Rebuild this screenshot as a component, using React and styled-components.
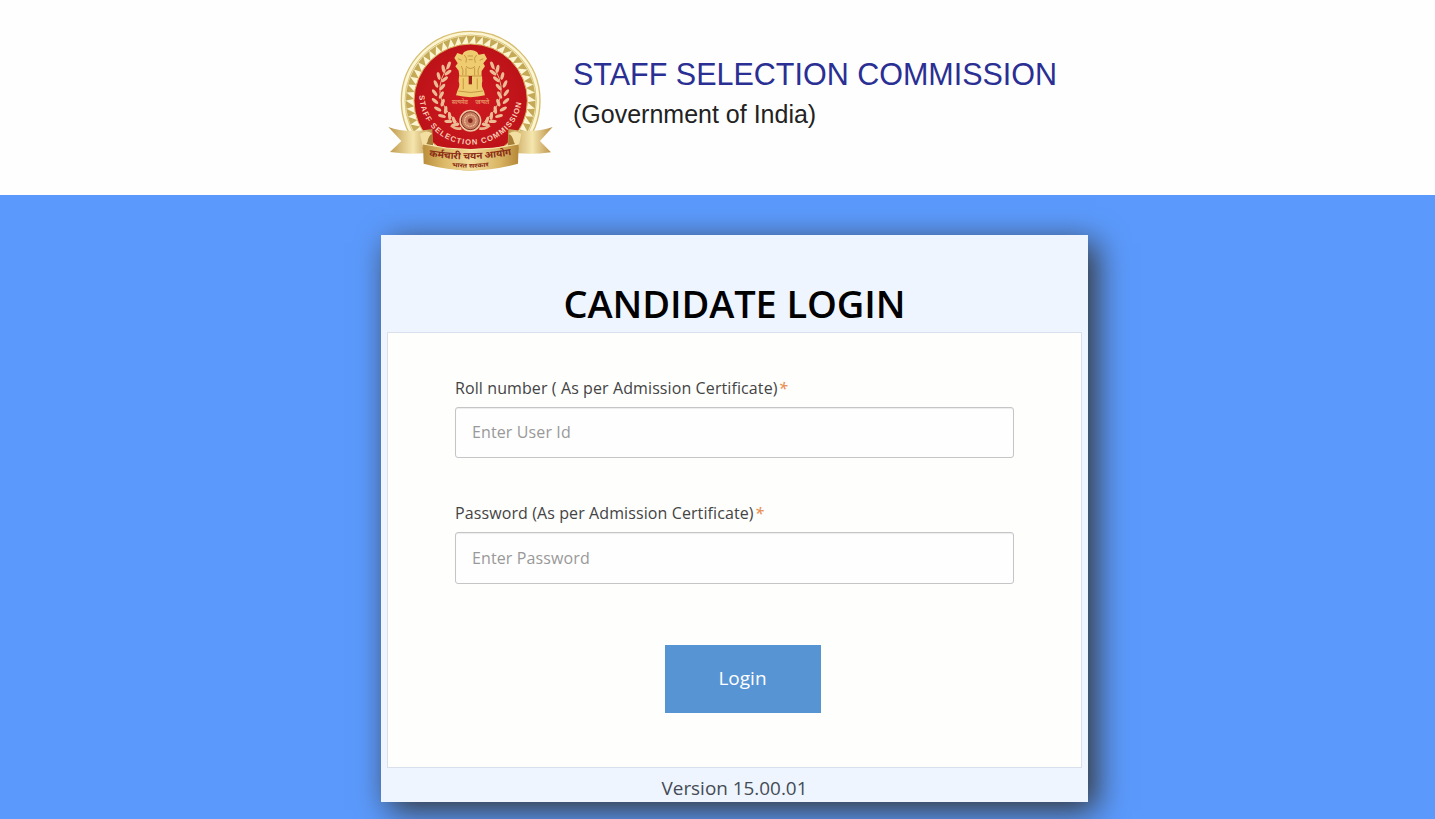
import React, {useState} from "react";
import styled, {createGlobalStyle} from "styled-components";

const TEETH = Array.from({length: 50}, (_, i) => (i * 360) / 50);

const LEAVES = [
  [206, 136, 40], [190, 146, 10], [204, 158, 75], [176, 168, 5], [194, 178, 70],
  [168, 192, -5], [187, 201, 60], [164, 218, -15], [184, 225, 50], [165, 243, -28],
  [188, 248, 40], [173, 267, -40], [197, 270, 28], [186, 288, -55], [209, 288, 15],
  [205, 304, -68], [222, 301, 0], [226, 314, -80],
];

function Laurel() {
  return (
    <g>
      <path d="M212 128 Q138 222 232 308" fill="none" stroke="#e9b48a" strokeWidth="3"/>
      {LEAVES.map(([x, y, a]) => (
        <ellipse key={`${x}-${y}`} cx={x} cy={y} rx="5" ry="12" fill="#ecbd94"
          transform={`rotate(${a - 20} ${x} ${y})`}/>
      ))}
    </g>
  );
}

function Emblem() {
  return (
    <EmblemSvg viewBox="0 0 540 480">
      <defs>
        <linearGradient id="gold" x1="0" y1="0" x2="1" y2="0">
          <stop offset="0" stopColor="#b98d3c"/>
          <stop offset=".22" stopColor="#dcb968"/>
          <stop offset=".5" stopColor="#f3dc9c"/>
          <stop offset=".8" stopColor="#d9b564"/>
          <stop offset="1" stopColor="#b58838"/>
        </linearGradient>
        <linearGradient id="tail" x1="0" y1="0" x2="1" y2="0">
          <stop offset="0" stopColor="#bd974a"/>
          <stop offset=".55" stopColor="#f5e6ae"/>
          <stop offset="1" stopColor="#b98d42"/>
        </linearGradient>
        <radialGradient id="red">
          <stop offset="0" stopColor="#cf1a20"/>
          <stop offset="1" stopColor="#bd1219"/>
        </radialGradient>
        <path id="motto" d="M118 226 A154 148 0 0 0 426 226"/>
        <path id="bandTop" d="M147 409 Q272 429 397 404"/>
        <path id="bandLow" d="M215 439 Q272 448 330 438"/>
      </defs>

      <circle cx="272" cy="242" r="208" fill="#fbf5d2" stroke="#d6bd70" strokeWidth="4"/>
      <circle cx="272" cy="242" r="197" fill="none" stroke="#dcc478" strokeWidth="3"/>
      {TEETH.map((a) => (
        <path key={a} d="M260 48 L284 48 L266 72 Z" fill="#c4a957" transform={`rotate(${a} 272 242)`}/>
      ))}
      <circle cx="272" cy="242" r="170" fill="url(#red)" stroke="#d9b35c" strokeWidth="3"/>

      <Laurel/>
      <g transform="translate(543 0) scale(-1 1)"><Laurel/></g>

      <g fill="#efcc70">
        <path d="M252 96 Q272 84 291 96 L296 104 L313 101 L321 116 L310 130 L315 139 L305 153 L304 176 L239 176 L236 152 L226 139 L233 130 L223 114 L232 99 L247 104 Z"/>
        <path d="M237 168 L306 168 L307 184 Q302 196 312 214 L315 226 Q272 237 228 226 L232 213 Q241 198 236 184 Z"/>
      </g>
      <g fill="none" stroke="#bd8b3a" strokeWidth="2.5">
        <path d="M253 105 Q263 114 258 128 M290 105 Q279 114 286 128 M263 108 h16 M266 119 h12"/>
        <path d="M234 116 l11 5 M310 116 l-11 5 M244 138 q8 12 4 27 M299 138 q-8 12 -4 27"/>
        <path d="M258 139 q14 13 27 0 M238 168 h67"/>
        <path d="M258 143 v23 M284 143 v23 M235 213 Q272 222 309 213"/>
      </g>
      <path d="M266 168 h10 v25 h-10 Z" fill="#9f251b"/>
      <path d="M250 175 v33 M292 175 v33" stroke="#d3a548" strokeWidth="4"/>

      <SmallScript x="215" y="252" textLength="49" lengthAdjust="spacingAndGlyphs">सत्यमेव</SmallScript>
      <SmallScript x="286" y="252" textLength="42" lengthAdjust="spacingAndGlyphs">जयते</SmallScript>

      <circle cx="271" cy="302" r="33" fill="#efc6a0"/>
      <circle cx="271" cy="302" r="27" fill="#c77d5e" stroke="#7c2f22" strokeWidth="3"/>
      <circle cx="271" cy="302" r="17" fill="none" stroke="#f0c9a5" strokeWidth="4" strokeDasharray="3 2"/>
      <circle cx="271" cy="302" r="7" fill="#852b22"/>
      <path d="M213 316 Q226 329 244 325 M329 316 Q316 329 298 325" fill="none" stroke="#e9b48a" strokeWidth="8"/>

      <Motto><textPath href="#motto" textLength="452">STAFF SELECTION COMMISSION</textPath></Motto>

      <path d="M25 321 Q80 341 157 327 L160 395 Q105 407 30 396 L64 363 Z" fill="url(#tail)"/>
      <path d="M518 321 Q460 341 385 327 L382 395 Q438 407 513 397 L480 363 Z" fill="url(#tail)"/>
      <path d="M128 388 L128 342 Q145 332 157 346 L160 388 Z" fill="#a67d36"/>
      <path d="M416 388 L416 342 Q399 332 386 346 L383 388 Z" fill="#a67d36"/>
      <path d="M120 342 Q139 327 157 341 Q146 344 142 367 L130 388 Z" fill="#f2dea0"/>
      <path d="M424 342 Q405 327 386 341 Q397 344 402 367 L414 388 Z" fill="#f2dea0"/>
      <path d="M129 371 Q272 404 416 371 L414 431 Q272 471 131 431 Z" fill="url(#gold)"/>
      <path d="M129 372 Q272 405 416 372" fill="none" stroke="#f8e7ad" strokeWidth="3"/>
      <BandText size={29}>
        <textPath href="#bandTop" textLength="249" lengthAdjust="spacingAndGlyphs">कर्मचारी चयन आयोग</textPath>
      </BandText>
      <BandText size={18}>
        <textPath href="#bandLow" textLength="112" lengthAdjust="spacingAndGlyphs">भारत सरकार</textPath>
      </BandText>
    </EmblemSvg>
  );
}

function LoginField({id, label, type, placeholder, value, onChange, inputHeight}) {
  return (
    <Field>
      <Label htmlFor={id}>{label}<Star>*</Star></Label>
      <Input id={id} type={type} placeholder={placeholder} value={value} onChange={onChange} $height={inputHeight}/>
    </Field>
  );
}

function App() {
  const [userId, setUserId] = useState("");
  const [password, setPassword] = useState("");
  const submitHandler = (e) => {
    e.preventDefault();
  };

  return (
    <Page>
      <GlobalStyle/>
      <Header>
        <Emblem/>
        <Brand>
          <BrandTitle>STAFF SELECTION COMMISSION</BrandTitle>
          <BrandSub>(Government of India)</BrandSub>
        </Brand>
      </Header>
      <Main>
        <Card>
          <CardTitle>CANDIDATE LOGIN</CardTitle>
          <Panel onSubmit={submitHandler}>
            <LoginField id="userId" type="text" label="Roll number ( As per Admission Certificate)" inputHeight={51}
              placeholder="Enter User Id" value={userId} onChange={(e) => setUserId(e.target.value)}/>
            <LoginField id="password" type="password" label="Password (As per Admission Certificate)" inputHeight={52}
              placeholder="Enter Password" value={password} onChange={(e) => setPassword(e.target.value)}/>
            <LoginBtn type="submit">Login</LoginBtn>
          </Panel>
          <Version>Version 15.00.01</Version>
        </Card>
      </Main>
    </Page>
  );
}

const GlobalStyle = createGlobalStyle`
  * { box-sizing: border-box; }
  body {
    margin: 0;
    font-family: "Open Sans", "Noto Sans", sans-serif;
    background: #5b9afc;
  }
`
const Page = styled.div`
  display: flex; flex-direction: column;
  height: 100vh;
  overflow: hidden;
`
const Header = styled.header`
  display: flex;
  flex: none;
  height: 195px;
  padding: 20px 0 0 380px;
  background: #fefefe;
`
const EmblemSvg = styled.svg`
  width: 180px; height: 160px;
`
const Motto = styled.text`
  font: bold 23px "Liberation Sans", sans-serif;
  fill: #f8cdb5;
`
const SmallScript = styled.text`
  font: bold 18px "Noto Sans", "Noto Sans Devanagari", sans-serif;
  fill: #e58d62;
`
const BandText = styled.text`
  font-family: "Noto Sans", "Noto Sans Devanagari", sans-serif;
  font-size: ${(props) => props.size}px; font-weight: bold;
  fill: #8c2d14;
`
const Brand = styled.div`
  padding: 36px 0 0 13px;
  font-family: "Liberation Sans", Arial, sans-serif;
`
const BrandTitle = styled.h1`
  margin: 0;
  font-size: 30.5px; font-weight: normal; line-height: 36px;
  color: #2a2f93;
  white-space: nowrap;
`
const BrandSub = styled.p`
  margin: 7px 0 0;
  font-size: 25px; line-height: 30px;
  color: #222222;
`
const Main = styled.main`
  flex: 1;
  padding: 40px 0 0 381px;
  background: #5b9afc;
`
const Card = styled.section`
  display: flex; flex-direction: column;
  width: 707px; height: 567px;
  padding: 0 6px;
  background: #eef5ff;
  box-shadow: 8px 8px 30px #333333;
`
const CardTitle = styled.h2`
  height: 97px;
  margin: 0; padding-top: 42px;
  font-size: 38px; font-weight: 600; line-height: 52px;
  letter-spacing: -0.1px;
  text-align: center;
  color: #000000;
`
const Panel = styled.form`
  display: flex; flex-direction: column;
  height: 436px;
  padding: 43px 67px 0;
  border: 1px solid #dadfee;
  background: #fefefd;
`
const Field = styled.div`
  display: flex; flex-direction: column;
  height: 125px;
`
const Label = styled.label`
  height: 31px;
  font-size: 16px; line-height: 24px;
  letter-spacing: 0.1px;
  color: #444444;
`
const Star = styled.span`
  margin-left: 1px;
  font-style: italic; font-weight: 600;
  color: #e8935a;
`
const Input = styled.input`
  width: 559px; height: ${(props) => props.$height}px;
  padding: 0 16px 1px;
  border: 1px solid #c6c4c6; border-radius: 3px;
  background: #fefefe;
  box-shadow: inset 0 1px 1px rgba(0, 0, 0, 0.07);
  font-family: inherit; font-size: 16px;
  letter-spacing: 0.12px;
  color: #444444;
  &::placeholder {color: #999999;}
  &:focus {outline: none;}
`
const LoginBtn = styled.button`
  align-self: flex-start;
  width: 156px; height: 68px;
  margin: 19px 0 0 210px;
  padding: 0 1px 2px 0;
  border: none;
  background: #5794d4;
  font-family: inherit; font-size: 19px;
  color: #ffffff;
  cursor: pointer;
`
const Version = styled.div`
  padding-top: 6px;
  font-size: 18.9px; line-height: 28px;
  text-align: center;
  color: #444b55;
`

export default App;
